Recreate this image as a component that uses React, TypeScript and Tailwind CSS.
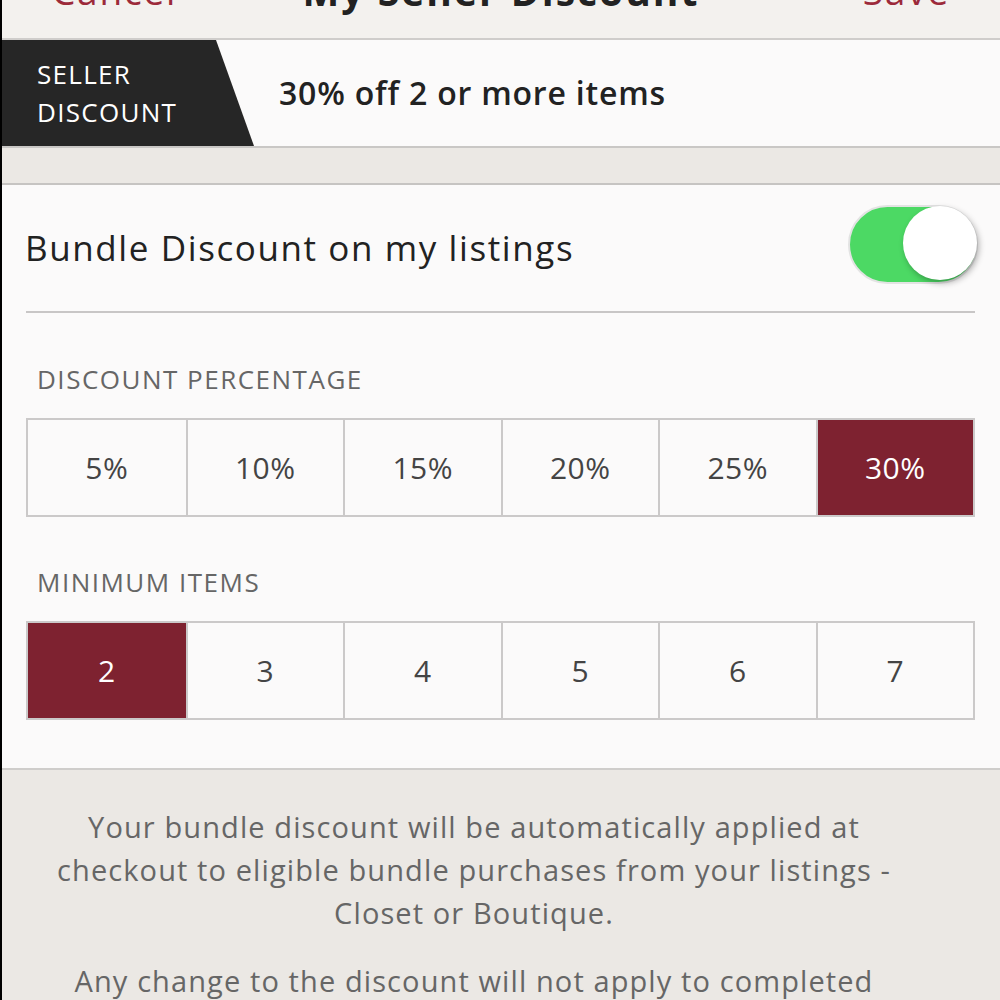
import React, { useState } from "react";

const FONT = { fontFamily: "'Open Sans', Lato, 'Liberation Sans', sans-serif" };

const percents = ["5%", "10%", "15%", "20%", "25%", "30%"];
const minimums = ["2", "3", "4", "5", "6", "7"];

function Segmented({
  options,
  value,
  onChange,
}: {
  options: string[];
  value: string;
  onChange: (v: string) => void;
}) {
  return (
    <div className="grid grid-cols-6 ml-[24px] mr-[25px] border-2 border-[#cbc9c9]">
      {options.map((o, i) => {
        const active = o === value;
        return (
          <button
            key={o}
            onClick={() => onChange(o)}
            className={
              "h-[95px] flex items-center justify-center text-[30px] tracking-[0.5px] " +
              (i > 0 ? "border-l-2 border-[#cbc9c9] " : "") +
              (active ? "bg-[#7e2230] text-white" : "bg-[#fbfafa] text-[#444]")
            }
          >
            {o}
          </button>
        );
      })}
    </div>
  );
}

export default function App() {
  const [pct, setPct] = useState("30%");
  const [min, setMin] = useState("2");
  const [on, setOn] = useState(true);

  return (
    <div
      style={FONT}
      className="w-[1000px] h-[1000px] overflow-hidden bg-[#ebe8e4] border-l-2 border-black flex flex-col"
    >
      {/* navigation bar */}
      <div className="h-[40px] shrink-0 bg-[#f3f1ee] border-b-2 border-[#cfcdcb] overflow-hidden">
        <div className="relative h-[40px] -mt-[29px] flex items-center justify-between pl-[50px] pr-[50px]">
          <span className="text-[37px] leading-[40px] tracking-[1.8px] text-[#9c2a3a]">Cancel</span>
          <span className="absolute left-0 right-0 text-center text-[39px] leading-[40px] tracking-[2px] font-bold text-[#222] pointer-events-none">
            My Seller Discount
          </span>
          <span className="text-[37px] leading-[40px] tracking-[1.8px] text-[#9c2a3a]">Save</span>
        </div>
      </div>

      {/* seller discount banner */}
      <div className="h-[108px] shrink-0 flex items-center bg-[#fbfafa] border-b-2 border-[#c9c7c5]">
        <div
          className="h-full w-[252px] bg-[#262626] flex flex-col justify-center pl-[35px] text-white text-[26px] leading-[38px] tracking-[1.3px]"
          style={{ clipPath: "polygon(0 0, 214px 0, 252px 100%, 0 100%)" }}
        >
          <span>SELLER</span>
          <span>DISCOUNT</span>
        </div>
        <span className="ml-[25px] text-[32px] tracking-[0.8px] font-semibold text-[#222]">
          30% off 2 or more items
        </span>
      </div>

      <div className="h-[37px] shrink-0 bg-[#ebe8e4] border-b-2 border-[#c6c4c2]" />

      {/* bundle settings */}
      <div className="shrink-0 bg-[#fbfafa] border-b-2 border-[#cfcdcb] pb-[48px]">
        <div className="flex items-center justify-between pl-[23px] pr-[22px] h-[126px]">
          <span className="text-[35px] tracking-[1.6px] text-[#222]">Bundle Discount on my listings</span>
          <button
            onClick={() => setOn(!on)}
            className={
              "relative w-[130px] h-[79px] rounded-full border-2 -mt-[8px] " +
              (on ? "bg-[#4cd964] border-[#e3e3e3]" : "bg-[#fbfafa] border-[#e3e3e3]")
            }
          >
            <span
              className={
                "absolute top-[-1px] w-[74px] h-[74px] rounded-full bg-white shadow-[2px_3px_6px_rgba(0,0,0,0.3)] " +
                (on ? "right-[-1px]" : "left-[-1px]")
              }
            />
          </button>
        </div>
        <div className="ml-[24px] mr-[25px] h-[2px] bg-[#c8c6c6]" />

        <div className="pl-[35px] pt-[49px] pb-[22px] text-[26px] leading-[34px] tracking-[1.5px] text-[#666]">
          DISCOUNT PERCENTAGE
        </div>
        <Segmented options={percents} value={pct} onChange={setPct} />

        <div className="pl-[35px] pt-[48px] pb-[22px] text-[26px] leading-[34px] tracking-[1.5px] text-[#666]">
          MINIMUM ITEMS
        </div>
        <Segmented options={minimums} value={min} onChange={setMin} />
      </div>

      {/* footnote */}
      <div className="pl-[8px] pr-[62px] pt-[35px] text-center text-[29px] leading-[43px] tracking-[1.1px] text-[#666]">
        <p>
          Your bundle discount will be automatically applied at
          <br />
          checkout to eligible bundle purchases from your listings -
          <br />
          Closet or Boutique.
        </p>
        <p className="mt-[25px]">
          Any change to the discount will not apply to completed
          <br />
          purchases.
        </p>
      </div>
    </div>
  );
}
